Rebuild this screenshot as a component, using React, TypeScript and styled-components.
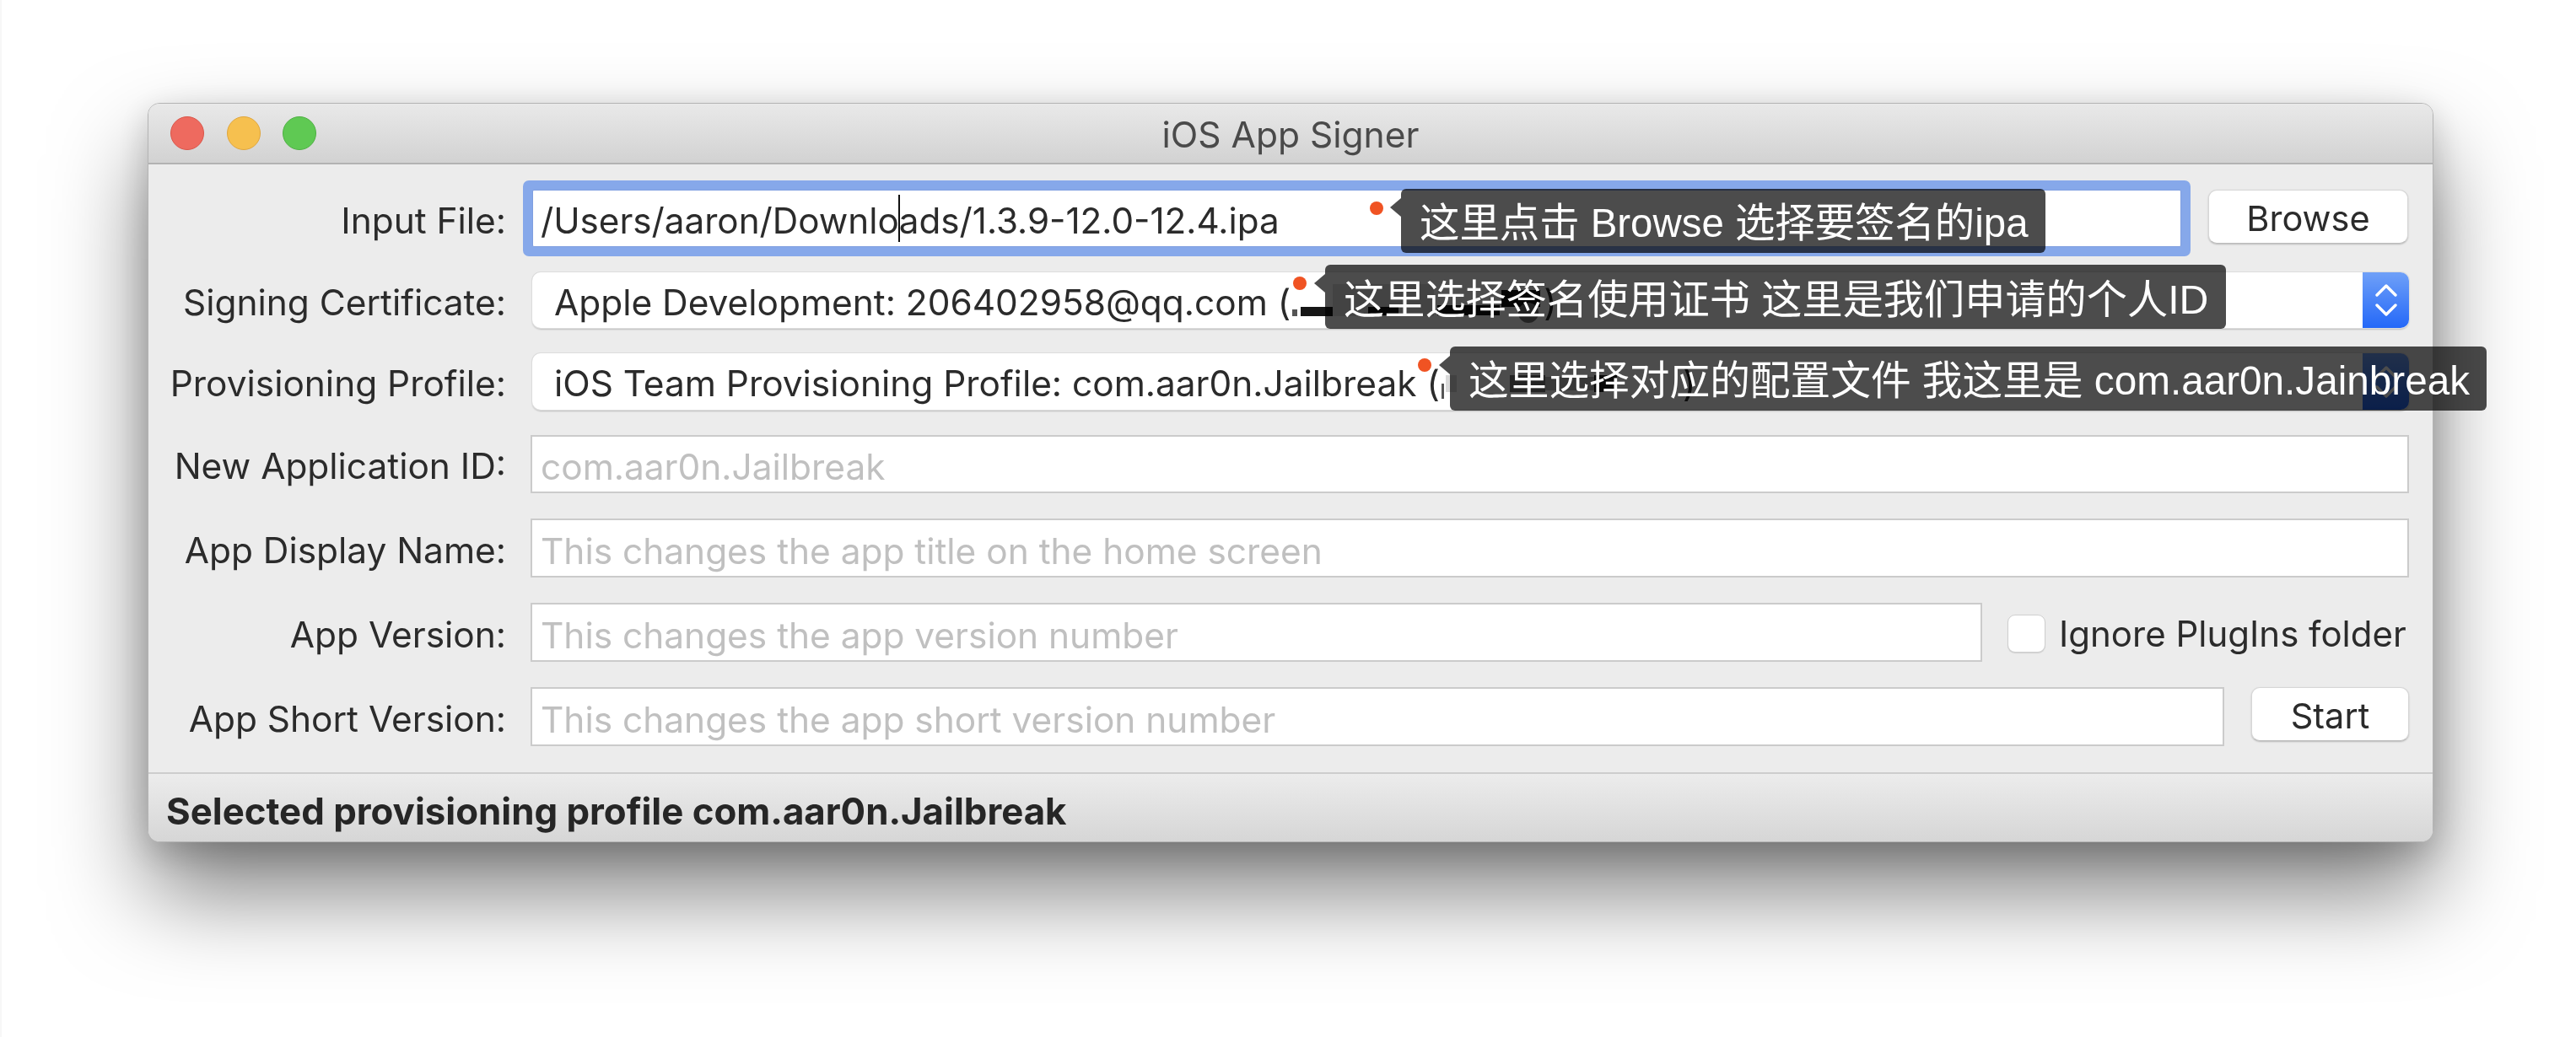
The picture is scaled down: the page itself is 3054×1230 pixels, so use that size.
import React from 'react';
import styled, { createGlobalStyle } from 'styled-components';

const GlobalStyle = createGlobalStyle`
  html, body {
    margin: 0;
    padding: 0;
    background: #fff;
  }
`;

const FONT = `Inter, "Noto Sans CJK SC", "Liberation Sans", sans-serif`;

const Page = styled.div`
  box-sizing: border-box;
  width: 3054px;
  height: 1230px;
  padding: 122px 0 0 175px;
  overflow: hidden;
  background: #fff;
  border-left: 2px solid #f7f7f7;
  font-family: ${FONT};
  color: #2b2b2b;
`;

const Window = styled.div`
  position: relative;
  box-sizing: border-box;
  width: 2710px;
  height: 877px;
  margin-left: -2px;
  display: flex;
  flex-direction: column;
  background: #ececec;
  border: 1px solid #b4b4b4;
  border-radius: 14px;
  box-shadow: 0 60px 110px rgba(0, 0, 0, 0.5), 0 12px 40px rgba(0, 0, 0, 0.18);
  filter: blur(0.6px);
`;

const TitleBar = styled.div`
  box-sizing: border-box;
  flex: 0 0 72px;
  display: grid;
  grid-template-columns: 1fr auto 1fr;
  align-items: center;
  padding-left: 26px;
  background: linear-gradient(#e9e9e9, #d2d2d2);
  border-bottom: 2px solid #b2b2b2;
  border-radius: 13px 13px 0 0;
`;

const Lights = styled.div`
  display: flex;
  gap: 26.5px;
`;

const Light = styled.span<{ $fill: string; $edge: string }>`
  box-sizing: border-box;
  width: 40px;
  height: 40px;
  border-radius: 50%;
  background: ${p => p.$fill};
  border: 1px solid ${p => p.$edge};
`;

const Title = styled.div`
  font-size: 42.5px;
  color: #4a4a4a;
  padding: 2px 26px 0 0;
`;

const Form = styled.div`
  flex: 1;
  display: flex;
  flex-direction: column;
  gap: 30px;
  padding: 30px 28px 0 0;
`;

const Row = styled.div<{ $h: number }>`
  height: ${p => p.$h}px;
  display: flex;
  align-items: center;
`;

const Label = styled.div`
  flex: 0 0 424px;
  text-align: right;
  font-size: 42.4px;
  margin-right: 29px;
  padding-top: 4px;
  white-space: nowrap;
`;

const TextField = styled.div<{ $muted?: boolean }>`
  box-sizing: border-box;
  flex: 1;
  height: 100%;
  display: flex;
  align-items: center;
  padding: 6px 0 0 10px;
  background: #fff;
  border: 2px solid #cbcbcb;
  font-size: 42.4px;
  white-space: pre;
  color: ${p => (p.$muted ? '#c0c0c0' : '#2b2b2b')};
`;

const FocusField = styled(TextField)`
  margin: 0 23px 0 2px;
  padding: 5px 0 0 9px;
  font-size: 42.2px;
  border: 1px solid #7f9fe0;
  box-shadow: 0 0 0 11px #86a8ea;
  border-radius: 2px;
`;

const Caret = styled.span`
  display: inline-block;
  width: 2px;
  height: 56px;
  margin: -5px -1px 0;
  background: #111;
`;

const Push = styled.div`
  width: 9px;
`;

const Button = styled.div<{ $w: number }>`
  box-sizing: border-box;
  flex: 0 0 ${p => p.$w}px;
  height: 64px;
  align-self: flex-start;
  display: flex;
  align-items: center;
  justify-content: center;
  padding-top: 3px;
  background: #fff;
  border: 1px solid #d6d6d6;
  border-bottom-color: #bdbdbd;
  border-radius: 10px;
  box-shadow: 0 1px 2px rgba(0, 0, 0, 0.22);
  font-size: 41.5px;
`;

const Select = styled.div`
  box-sizing: border-box;
  flex: 1;
  height: 100%;
  margin-left: 2px;
  display: flex;
  align-items: center;
  padding-left: 26px;
  background: #fff;
  border-radius: 10px;
  box-shadow: 0 0 0 1px #dcdcdc, 0 2px 2px rgba(0, 0, 0, 0.2);
  font-size: 42.4px;
  white-space: pre;
`;

const SelectValue = styled.div`
  flex: 1;
  display: flex;
  align-items: center;
  padding-top: 4px;
`;

const Stepper = styled.div`
  flex: 0 0 55px;
  height: 100%;
  display: flex;
  align-items: center;
  justify-content: center;
  background: linear-gradient(#6fa0f8, #2468f8);
  border-radius: 0 10px 10px 0;
`;

const CheckRow = styled.div`
  flex: 0 0 476px;
  display: flex;
  align-items: center;
  gap: 16px;
  margin-left: 30px;
  padding-top: 2px;
  font-size: 42px;
  white-space: nowrap;
`;

const CheckBox = styled.span`
  box-sizing: border-box;
  flex: 0 0 45px;
  height: 45px;
  background: #fff;
  border: 1px solid #cfcfcf;
  border-radius: 9px;
  box-shadow: 0 1px 1px rgba(0, 0, 0, 0.12);
`;

const Gap = styled.div<{ $w: number }>`
  flex: 0 0 ${p => p.$w}px;
`;

const StatusBar = styled.div`
  box-sizing: border-box;
  flex: 0 0 82px;
  display: flex;
  align-items: center;
  padding: 8px 0 0 21px;
  font-size: 43.8px;
  font-weight: 700;
  color: #262626;
  background: linear-gradient(#ececec, #d6d6d6);
  border-top: 2px solid #cdcdcd;
  border-radius: 0 0 13px 13px;
`;

const Note = styled.div<{ $x: number; $y: number; $w: number; $size: number }>`
  position: absolute;
  left: ${p => p.$x}px;
  top: ${p => p.$y}px;
  width: ${p => p.$w}px;
  height: 76px;
  box-sizing: border-box;
  display: flex;
  align-items: center;
  padding: 0 0 3px 22px;
  background: rgba(0, 0, 0, 0.7);
  border-radius: 6px;
  color: #fff;
  font-family: "Liberation Sans", "Noto Sans CJK SC", sans-serif;
  font-size: ${p => p.$size}px;
  white-space: pre;

  &::before {
    content: '';
    position: absolute;
    left: -13px;
    top: 11px;
    border-style: solid;
    border-width: 11px 13px 11px 0;
    border-color: transparent rgba(0, 0, 0, 0.7) transparent transparent;
  }
`;

const Dot = styled.span<{ $x: number; $y: number }>`
  position: absolute;
  left: ${p => p.$x}px;
  top: ${p => p.$y}px;
  width: 16px;
  height: 16px;
  border-radius: 50%;
  background: #f05323;
`;

const Chevrons = () => (
  <svg width="26" height="40" viewBox="0 0 26 40" fill="none" stroke="#fff" strokeWidth="3.4" strokeLinecap="round" strokeLinejoin="round">
    <path d="M2 14L13 3L24 14" />
    <path d="M2 26L13 37L24 26" />
  </svg>
);

// the redacted bit of the certificate name
const ScribbleCert = () => (
  <svg width="300" height="66" viewBox="0 0 300 66">
    <rect x="50" y="12" width="120" height="38" fill="#ccc" opacity="0.6" />
    <rect x="2" y="42" width="6" height="8" fill="#555" />
    <rect x="12" y="39" width="38" height="11" fill="#161616" />
    <rect x="92" y="39" width="36" height="10" fill="#111" />
    <rect x="174" y="37" width="74" height="12" fill="#111" />
    <rect x="250" y="19" width="46" height="20" fill="#111" />
    <circle cx="282" cy="46" r="12" fill="#777" />
  </svg>
);

const ScribbleProfile = () => (
  <svg width="288" height="66" viewBox="0 0 288 66">
    <rect x="2" y="33" width="3" height="18" fill="#555" />
    <rect x="7" y="23" width="13" height="20" fill="#d9d9d9" />
    <rect x="83" y="23" width="42" height="20" fill="#777" />
    <rect x="125" y="25" width="58" height="16" fill="#bbb" />
    <rect x="183" y="23" width="27" height="20" fill="#222" />
  </svg>
);

export default function App() {
  return (
    <Page>
      <GlobalStyle />
      <Window>
        <TitleBar>
          <Lights>
            <Light $fill="#ee6a5f" $edge="#da5549" />
            <Light $fill="#f6c04f" $edge="#e0a63d" />
            <Light $fill="#5fc953" $edge="#4fb044" />
          </Lights>
          <Title>iOS App Signer</Title>
          <div />
        </TitleBar>

        <Form>
          <Row $h={68}>
            <Label>Input File:</Label>
            <FocusField>
              /Users/aaron/Downlo<Caret />ads/1.3.9-12.0-12.4.ipa
            </FocusField>
            <Push />
            <Button $w={237}>Browse</Button>
            <Gap $w={1} />
          </Row>
          <Row $h={66}>
            <Label>Signing Certificate:</Label>
            <Select>
              <SelectValue>
                Apple Development: 206402958@qq.com (<ScribbleCert />)
              </SelectValue>
              <Stepper><Chevrons /></Stepper>
            </Select>
          </Row>
          <Row $h={67}>
            <Label>Provisioning Profile:</Label>
            <Select>
              <SelectValue>
                iOS Team Provisioning Profile: com.aar0n.Jailbreak (<ScribbleProfile />)
              </SelectValue>
              <Stepper><Chevrons /></Stepper>
            </Select>
          </Row>
          <Row $h={69}>
            <Label>New Application ID:</Label>
            <TextField $muted>com.aar0n.Jailbreak</TextField>
          </Row>
          <Row $h={70}>
            <Label>App Display Name:</Label>
            <TextField $muted>This changes the app title on the home screen</TextField>
          </Row>
          <Row $h={70}>
            <Label>App Version:</Label>
            <TextField $muted>This changes the app version number</TextField>
            <CheckRow>
              <CheckBox />
              Ignore PlugIns folder
            </CheckRow>
          </Row>
          <Row $h={70}>
            <Label>App Short Version:</Label>
            <TextField $muted>This changes the app short version number</TextField>
            <Gap $w={32} />
            <Button $w={187}>Start</Button>
          </Row>
        </Form>

        <StatusBar>Selected provisioning profile com.aar0n.Jailbreak</StatusBar>

        <Dot $x={1448} $y={116} />
        <Note $x={1485} $y={101} $w={764} $size={47.4}>这里点击 Browse 选择要签名的ipa</Note>
        <Dot $x={1357} $y={205} />
        <Note $x={1395} $y={191} $w={1068} $size={48.2}>这里选择签名使用证书 这里是我们申请的个人ID</Note>
        <Dot $x={1505} $y={302} />
        <Note $x={1543} $y={288} $w={1229} $size={47.7}>这里选择对应的配置文件 我这里是 com.aar0n.Jainbreak</Note>
      </Window>
    </Page>
  );
}
